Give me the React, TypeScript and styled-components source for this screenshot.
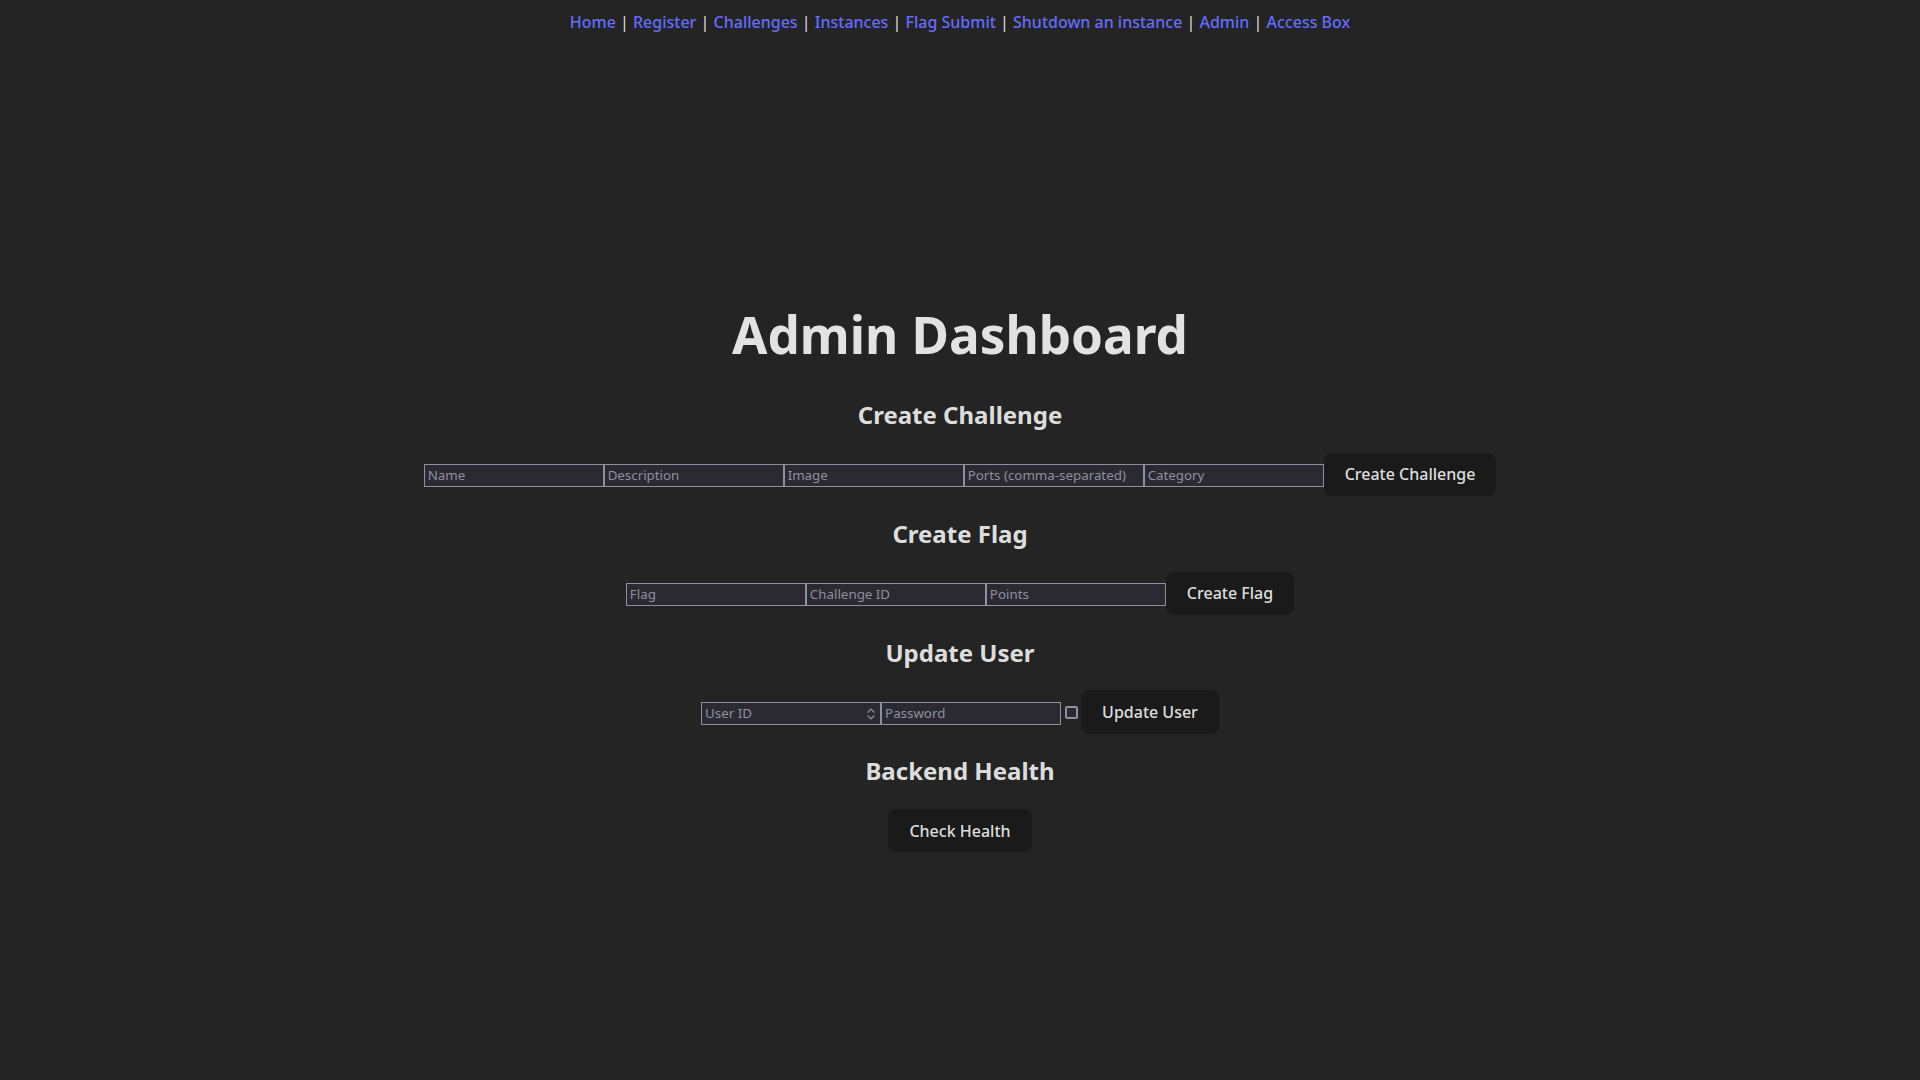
import React from "react";
import styled, { createGlobalStyle } from "styled-components";

const GlobalStyle = createGlobalStyle`
  html, body {
    margin: 0;
    padding: 0;
  }
  body {
    background: #242424;
    color: rgba(255, 255, 255, 0.87);
    font-family: "Noto Sans", "Open Sans", sans-serif;
    font-weight: 400;
    line-height: 1.5;
    font-synthesis: none;
    text-rendering: optimizeLegibility;
    -webkit-font-smoothing: antialiased;
  }
`;

const Page = styled.div`
  min-height: 100vh;
  display: flex;
  flex-direction: column;
  align-items: center;
`;

const Nav = styled.nav`
  padding: 10px 0;
  font-size: 16px;
  line-height: 24px;
  white-space: pre;
`;

const NavLink = styled.a`
  color: #646cff;
  font-weight: 500;
  text-decoration: none;
  cursor: pointer;
`;

const Main = styled.main`
  display: block;
  padding-top: 228px;
  text-align: center;
`;

const Title = styled.h1`
  font-size: 51.2px;
  line-height: 1.1;
  font-weight: 700;
  margin: 34.3px 0;
`;

const SectionTitle = styled.h2`
  font-size: 24px;
  line-height: 36px;
  font-weight: 700;
  margin: 19.92px 0;
`;

const Row = styled.div`
  display: flex;
  justify-content: center;
  align-items: baseline;
  height: 43px;
`;

const fieldBox = `
  box-sizing: border-box;
  width: 180px;
  height: 23px;
  background: #2b2a33;
  border: 1px solid #8f8f9d;
  border-radius: 0;
`;

const TextField = styled.input`
  ${fieldBox}
  padding: 0 3px;
  margin: 0;
  color: #fbfbfe;
  font-family: "Noto Sans", "Open Sans", sans-serif;
  font-size: 13.33px;
  line-height: 21px;
  outline: none;
  &::placeholder {
    color: #8f8f9d;
    opacity: 1;
  }
`;

const NumberBox = styled.label`
  ${fieldBox}
  display: inline-flex;
  align-items: center;
  padding: 0 5px 0 3px;
  font-size: 13.33px;
  line-height: 21px;
`;

const BareInput = styled.input`
  flex: 1;
  min-width: 0;
  height: 21px;
  padding: 0;
  margin: 0;
  border: none;
  background: transparent;
  color: #fbfbfe;
  font-family: "Noto Sans", "Open Sans", sans-serif;
  font-size: 13.33px;
  line-height: 21px;
  outline: none;
  &::placeholder {
    color: #8f8f9d;
    opacity: 1;
  }
`;

const Check = styled.input`
  appearance: none;
  box-sizing: border-box;
  width: 13px;
  height: 13px;
  margin: 4px 3px 2px 4px;
  border: 2px solid #8f8f9d;
  border-radius: 2px;
  background: #2b2a33;
  align-self: center;
`;

const Button = styled.button`
  border-radius: 8px;
  border: 1px solid transparent;
  padding: 0.6em 1.25em;
  font-size: 16px;
  font-weight: 500;
  font-family: "Noto Sans", "Open Sans", sans-serif;
  line-height: normal;
  background-color: #1a1a1a;
  color: rgba(255, 255, 255, 0.87);
  cursor: pointer;
  margin: 0;
`;

const Spinner = () => (
  <svg width="8" height="12" viewBox="0 0 8 12" fill="none" stroke="#9a9aa6" strokeWidth="1.2" strokeLinecap="round" strokeLinejoin="round">
    <path d="M1 4.2 L4 1.2 L7 4.2" />
    <path d="M1 7.8 L4 10.8 L7 7.8" />
  </svg>
);

const links = [
  "Home",
  "Register",
  "Challenges",
  "Instances",
  "Flag Submit",
  "Shutdown an instance",
  "Admin",
  "Access Box",
];

export default function App() {
  return (
    <>
      <GlobalStyle />
      <Page>
        <Nav>
          {links.map((l, i) => (
            <React.Fragment key={l}>
              {i > 0 && " | "}
              <NavLink>{l}</NavLink>
            </React.Fragment>
          ))}
        </Nav>
        <Main>
          <Title>Admin Dashboard</Title>

          <SectionTitle>Create Challenge</SectionTitle>
          <Row>
            <TextField placeholder="Name" />
            <TextField placeholder="Description" />
            <TextField placeholder="Image" />
            <TextField placeholder="Ports (comma-separated)" />
            <TextField placeholder="Category" />
            <Button>Create Challenge</Button>
          </Row>

          <SectionTitle>Create Flag</SectionTitle>
          <Row>
            <TextField placeholder="Flag" />
            <TextField placeholder="Challenge ID" />
            <TextField placeholder="Points" />
            <Button>Create Flag</Button>
          </Row>

          <SectionTitle>Update User</SectionTitle>
          <Row>
            <NumberBox>
              <BareInput placeholder="User ID" />
              <Spinner />
            </NumberBox>
            <TextField type="password" placeholder="Password" />
            <Check type="checkbox" />
            <Button>Update User</Button>
          </Row>

          <SectionTitle>Backend Health</SectionTitle>
          <Row>
            <Button>Check Health</Button>
          </Row>
        </Main>
      </Page>
    </>
  );
}
